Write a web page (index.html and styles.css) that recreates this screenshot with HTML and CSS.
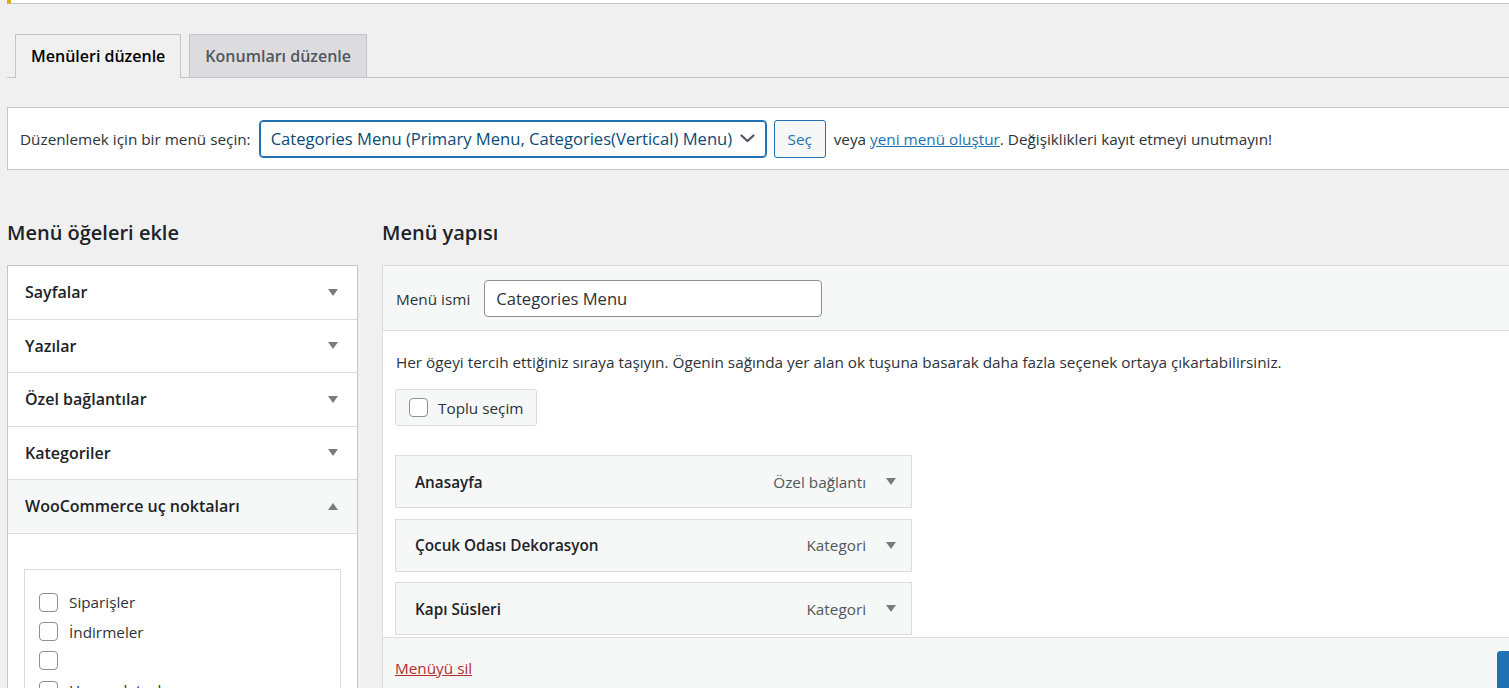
FILE: index.html
```html
<!DOCTYPE html>
<html lang="tr">
<head>
  <meta charset="UTF-8" />
  <meta name="viewport" content="width=device-width, initial-scale=1.0" />
  <title>Menüler</title>
  <link rel="stylesheet" href="styles.css">
</head>
<body>
  <div class="wrap">
    <div class="notice"></div>

    <nav class="nav-tabs">
      <a href="#" class="nav-tab active">Menüleri düzenle</a>
      <a href="#" class="nav-tab">Konumları düzenle</a>
    </nav>

    <!-- Menu picker -->
    <div class="manage-menus">
      <span class="manage-label">Düzenlemek için bir menü seçin:</span>
      <div class="select-box">
        <span>Categories Menu (Primary Menu, Categories(Vertical) Menu)</span>
        <svg width="15" height="9" viewBox="0 0 15 9"><polyline points="1.5,1.5 7.5,7 13.5,1.5" fill="none" stroke="#50575e" stroke-width="2.2" stroke-linecap="round" stroke-linejoin="round"/></svg>
      </div>
      <button class="button">Seç</button>
      <span class="manage-hint">veya <a href="#">yeni menü oluştur</a>. Değişiklikleri kayıt etmeyi unutmayın!</span>
    </div>

    <div class="columns">
      <!-- Left: add items -->
      <div class="col-left">
        <h2>Menü öğeleri ekle</h2>
        <div class="accordion">
          <div class="acc-row"><span>Sayfalar</span><i class="arrow"></i></div>
          <div class="acc-row"><span>Yazılar</span><i class="arrow"></i></div>
          <div class="acc-row"><span>Özel bağlantılar</span><i class="arrow"></i></div>
          <div class="acc-row"><span>Kategoriler</span><i class="arrow"></i></div>
          <div class="acc-row open"><span>WooCommerce uç noktaları</span><i class="arrow up"></i></div>
          <div class="acc-content">
            <div class="endpoint-list">
              <label class="check-row"><span class="check"></span>Siparişler</label>
              <label class="check-row"><span class="check"></span>İndirmeler</label>
              <label class="check-row"><span class="check"></span></label>
              <label class="check-row"><span class="check"></span>Hesap detayları</label>
            </div>
          </div>
        </div>
      </div>

      <!-- Right: menu structure -->
      <div class="col-right">
        <h2>Menü yapısı</h2>
        <div class="menu-edit">
          <div class="menu-header">
            <span class="name-label">Menü ismi</span>
            <div class="name-input">Categories Menu</div>
          </div>
          <div class="menu-body">
            <p class="menu-help">Her ögeyi tercih ettiğiniz sıraya taşıyın. Ögenin sağında yer alan ok tuşuna basarak daha fazla seçenek ortaya çıkartabilirsiniz.</p>
            <div class="bulk-button"><span class="check"></span>Toplu seçim</div>
            <ul class="menu-items">
              <li class="menu-item"><span class="item-title">Anasayfa</span><span class="item-type">Özel bağlantı</span><i class="arrow"></i></li>
              <li class="menu-item"><span class="item-title">Çocuk Odası Dekorasyon</span><span class="item-type">Kategori</span><i class="arrow"></i></li>
              <li class="menu-item"><span class="item-title">Kapı Süsleri</span><span class="item-type">Kategori</span><i class="arrow"></i></li>
            </ul>
          </div>
          <div class="menu-footer">
            <a href="#" class="delete-link">Menüyü sil</a>
            <button class="save-button">Menüyü kaydet</button>
          </div>
        </div>
      </div>
    </div>
  </div>
</body>
</html>
```

FILE: styles.css
```css
html,
body {
  overflow: hidden;
}

body {
  margin: 0;
  font-family: 'Open Sans', 'Noto Sans', sans-serif;
  font-size: 15.3px;
  background-color: #f0f0f1;
  color: #2c3338;
}

.wrap {
  width: 1643px;
  margin-left: 7px;
}

.notice {
  height: 3px;
  background-color: white;
  border-left: 4px solid #dba617;
  border-bottom: 1px solid #c3c4c7;
}

/* Tabs */
.nav-tabs {
  display: flex;
  gap: 8px;
  margin-top: 30px;
  padding-left: 8px;
  border-bottom: 1px solid #c3c4c7;
}

.nav-tab {
  height: 42px;
  line-height: 42px;
  padding: 0 15px;
  margin-bottom: -1px;
  border: 1px solid #c3c4c7;
  border-bottom: none;
  background-color: #dcdcde;
  color: #50575e;
  font-size: 16px;
  font-weight: 600;
  text-decoration: none;
}

.nav-tab.active {
  background-color: #f0f0f1;
  color: #000;
  height: 43px;
}

/* Menu picker */
.manage-menus {
  display: flex;
  align-items: center;
  margin-top: 29px;
  height: 63px;
  padding: 0 12px;
  box-sizing: border-box;
  background-color: white;
  border: 1px solid #c3c4c7;
}

.manage-label {
  margin-right: 8px;
}

.select-box {
  display: flex;
  align-items: center;
  justify-content: space-between;
  width: 508px;
  height: 38px;
  box-sizing: border-box;
  padding: 0 11px 1px 11px;
  border: 1px solid #2271b1;
  box-shadow: 0 0 0 1px #2271b1 inset;
  border-radius: 4px;
  color: #0a4b78;
  font-size: 16.6px;
}

.button {
  margin-left: 7px;
  width: 52px;
  height: 38px;
  background-color: #f6f7f7;
  border: 1px solid #2271b1;
  border-radius: 3px;
  color: #2271b1;
  font-family: inherit;
  font-size: 15.3px;
}

.manage-hint {
  margin-left: 8px;
}

.manage-hint a {
  color: #2271b1;
}

/* Columns */
.columns {
  display: flex;
  gap: 24px;
  align-items: flex-start;
}

.columns h2 {
  margin: 49px 0 18px;
  font-size: 20px;
  line-height: 28px;
  font-weight: 600;
  color: #1d2327;
}

.col-left {
  width: 351px;
  flex-shrink: 0;
}

.col-right {
  flex: 1;
}

/* Accordion */
.accordion {
  background-color: white;
  border: 1px solid #c3c4c7;
}

.acc-row {
  display: flex;
  align-items: center;
  justify-content: space-between;
  height: 52.5px;
  padding: 0 19px 0 17px;
  border-bottom: 1px solid #dcdcde;
  font-size: 16px;
  font-weight: 600;
  color: #1d2327;
}

.acc-row.open {
  background-color: #f6f7f7;
}

.arrow {
  width: 0;
  height: 0;
  border-left: 5.5px solid transparent;
  border-right: 5.5px solid transparent;
  border-top: 7px solid #787c82;
}

.arrow.up {
  border-top: none;
  border-bottom: 7px solid #787c82;
}

.acc-content {
  padding: 35px 16px 0;
}

.endpoint-list {
  height: 140px;
  padding: 18px 14px 0;
  border: 1px solid #dcdcde;
  border-bottom: none;
}

.check-row {
  display: flex;
  align-items: center;
  height: 29.4px;
  gap: 11px;
}

.check {
  display: inline-block;
  width: 19px;
  height: 19px;
  box-sizing: border-box;
  border: 1px solid #8c8f94;
  border-radius: 4px;
  background-color: white;
}

/* Menu structure */
.menu-edit {
  background-color: white;
  border: 1px solid #dcdcde;
}

.menu-header {
  display: flex;
  align-items: center;
  gap: 14px;
  padding: 14px 13px 13px;
  background-color: #f6f7f7;
  border-bottom: 1px solid #dcdcde;
}

.name-input {
  width: 338px;
  height: 37px;
  box-sizing: border-box;
  padding: 0 11px;
  line-height: 35px;
  border: 1px solid #8c8f94;
  border-radius: 4px;
  background-color: white;
  font-size: 16.6px;
  color: #2c3338;
}

.menu-body {
  padding: 20px 12px 2px;
}

.menu-help {
  margin: 0 0 16px 1px;
  line-height: 22px;
}

.bulk-button {
  display: inline-flex;
  align-items: center;
  gap: 10px;
  height: 37px;
  box-sizing: border-box;
  padding: 0 13px 0 13px;
  background-color: #f6f7f7;
  border: 1px solid #dcdcde;
  border-radius: 3px;
}

.menu-items {
  list-style: none;
  margin: 29px 0 0;
  padding: 0;
}

.menu-item {
  display: flex;
  align-items: center;
  width: 517px;
  height: 53px;
  box-sizing: border-box;
  padding: 0 15px 0 19px;
  margin-bottom: 10.5px;
  background-color: #f6f7f7;
  border: 1px solid #dcdcde;
}

.menu-item:last-child {
  margin-bottom: 0;
}

.item-title {
  flex: 1;
  font-weight: 600;
  color: #1d2327;
}

.item-type {
  margin-right: 20px;
  color: #50575e;
}

.menu-footer {
  display: flex;
  align-items: flex-start;
  justify-content: space-between;
  padding: 13px 12px;
  background-color: #f6f7f7;
  border-top: 1px solid #dcdcde;
}

.delete-link {
  display: block;
  margin-top: 7px;
  line-height: 21px;
  color: #b32d2e;
}

.save-button {
  width: 140px;
  height: 40px;
  background-color: #2271b1;
  border: 1px solid #2271b1;
  border-radius: 3px;
  color: white;
  font-family: inherit;
  font-size: 15.3px;
}
```
